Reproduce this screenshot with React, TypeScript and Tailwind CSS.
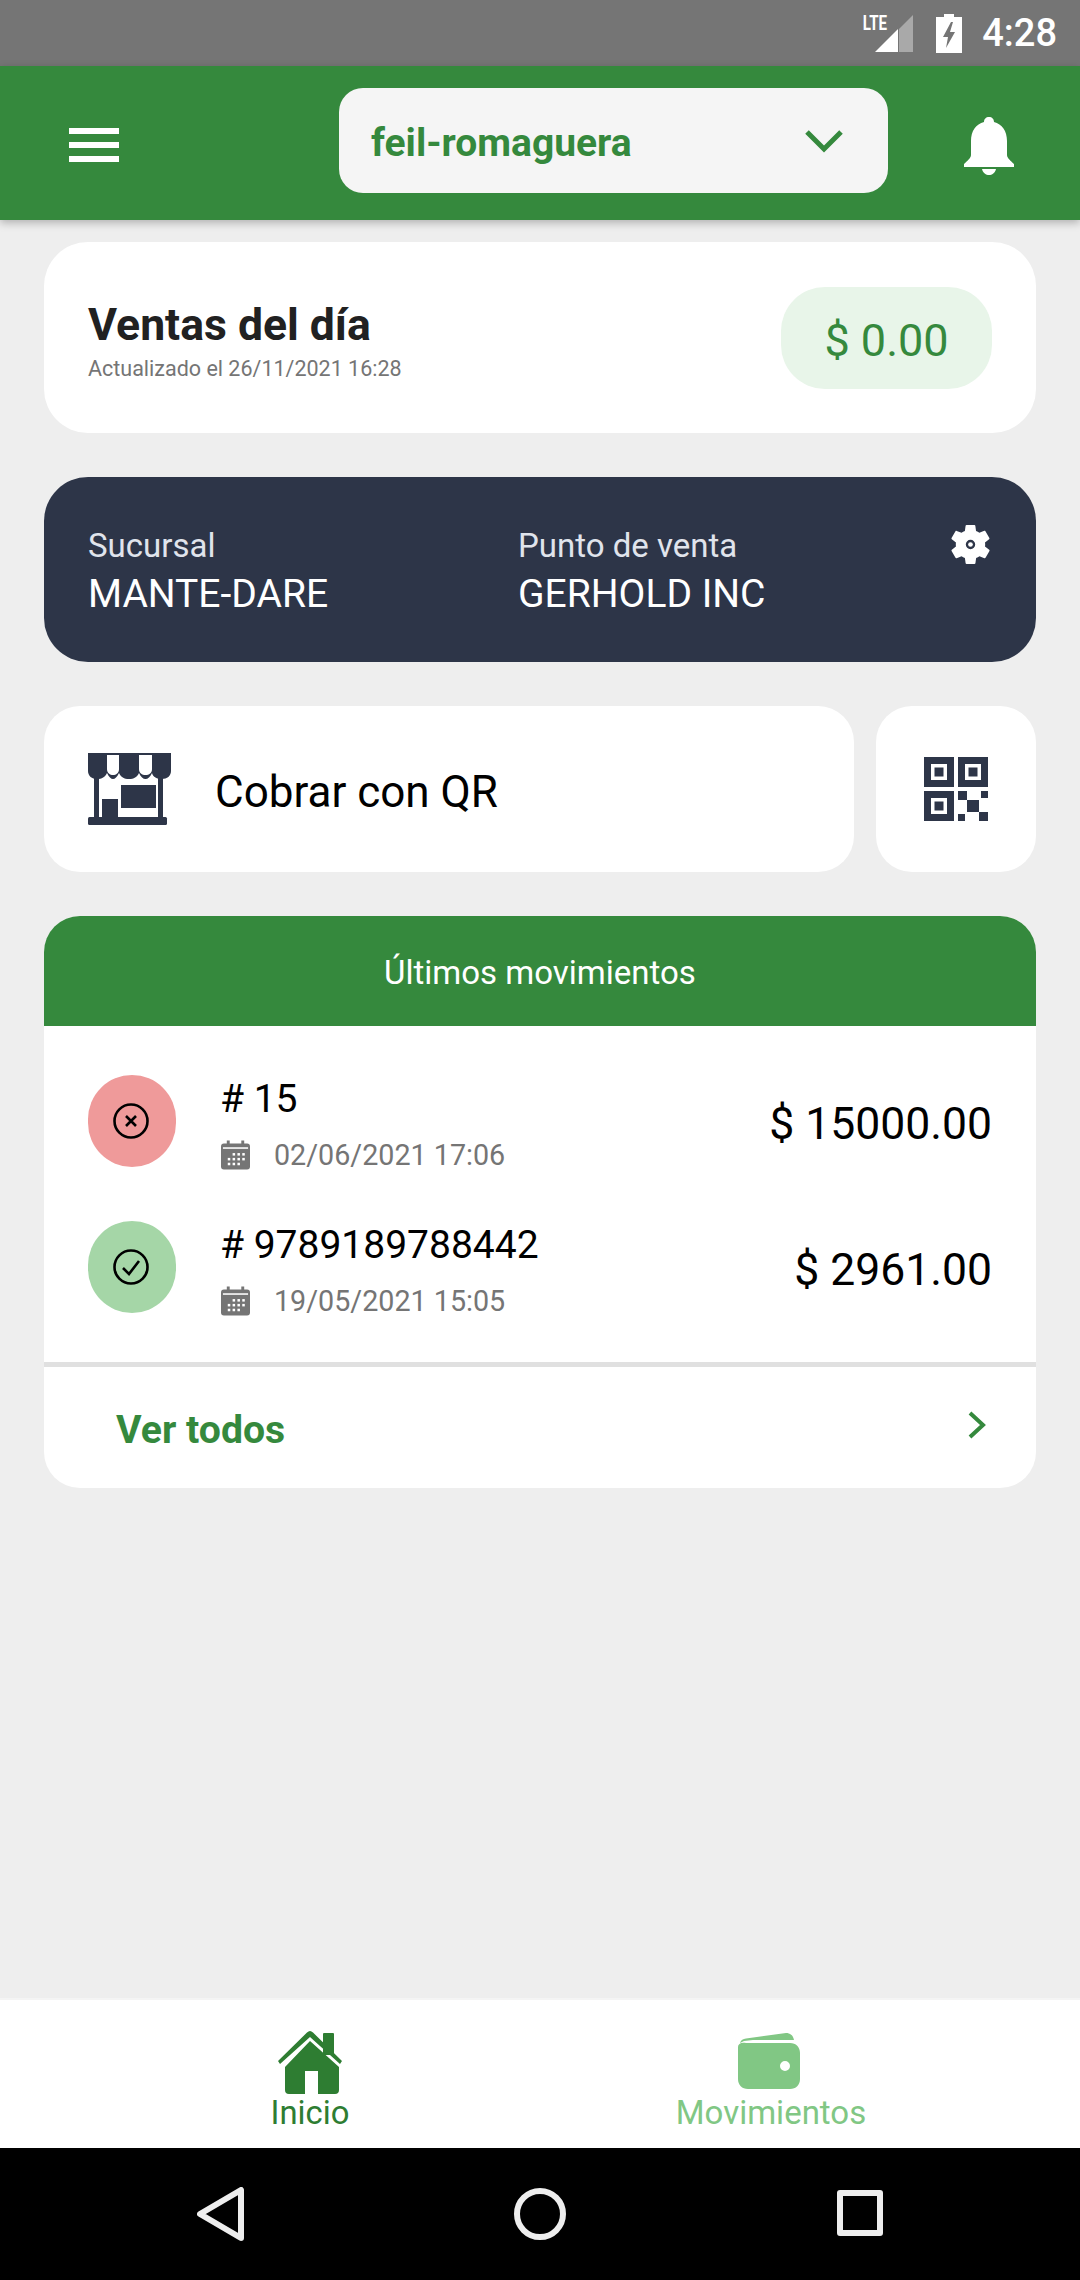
import React from "react";

function Status() {
  return (
    <div className="h-[66px] bg-[#757575] flex items-center justify-end pr-[23px] shrink-0">
      <div className="relative w-[38px] h-[37px] mr-[23px] mt-[1px]">
        <span className="absolute left-[-17px] top-[-4px] text-[21px] leading-[24px] font-bold text-white scale-x-[0.72]">LTE</span>
        <svg viewBox="0 0 38 37" className="w-[38px] h-[37px]">
          <path d="M24 14 L38 0 V37 H24 Z" fill="#a9a9a9" />
          <path d="M0 37 L23 14 V37 Z" fill="#fff" />
        </svg>
      </div>
      <svg viewBox="0 0 26 39" className="w-[26px] h-[39px] mr-[20px] mt-[1px]">
        <path d="M8 0 H18 V3 H26 V39 H0 V3 H8 Z" fill="#fff" />
        <path d="M15 8 L7 23 H12 L10 34 L19 18 H14 L17 8 Z" fill="#757575" />
      </svg>
      <span className="text-[38px] leading-none font-medium text-white">4:28</span>
    </div>
  );
}

function Header() {
  return (
    <div className="h-[154px] bg-[#35893d] flex items-start shrink-0 shadow-[0_3px_8px_rgba(0,0,0,0.25)] relative z-10">
      <div className="w-[339px] pl-[69px] pt-[62px] flex flex-col gap-[8px] shrink-0">
        <div className="w-[50px] h-[6px] bg-white" />
        <div className="w-[50px] h-[6px] bg-white" />
        <div className="w-[50px] h-[6px] bg-white" />
      </div>
      <div className="mt-[22px] w-[549px] h-[105px] bg-[#f5f5f5] rounded-[24px] flex items-center justify-between pl-[32px] pr-[45px] shrink-0">
        <span className="mt-[6px] text-[39px] font-bold text-[#35893d]">feil-romaguera</span>
        <svg viewBox="0 0 38 24" className="w-[38px] h-[24px]" fill="none" stroke="#35893d" strokeWidth="5">
          <path d="M2 3 L19 20 L36 3" />
        </svg>
      </div>
      <div className="flex-1 flex justify-center pl-[9px] pt-[51px]">
        <svg viewBox="0 0 50 58" className="w-[50px] h-[58px]" fill="#fff">
          <path d="M25 0 C28 0 30 2 30 5 C38 7 43 14 43 24 V38 C43 41 47 44 50 47 V50 H0 V47 C3 44 7 41 7 38 V24 C7 14 12 7 20 5 C20 2 22 0 25 0 Z" />
          <path d="M18 52 H32 C31 56 28 58 25 58 C22 58 19 56 18 52 Z" />
        </svg>
      </div>
    </div>
  );
}

function Calendar() {
  return (
    <svg viewBox="0 0 30 30" className="w-[29px] h-[30px] ml-[1px] shrink-0">
      <rect x="0" y="3" width="30" height="27" rx="3" fill="#757575" />
      <rect x="6" y="0" width="3" height="5" fill="#757575" />
      <rect x="21" y="0" width="3" height="5" fill="#757575" />
      <rect x="2" y="7" width="26" height="1.6" fill="#fff" />
      {[
        [12, 13], [17, 13], [22, 13],
        [7, 18], [12, 18], [17, 18], [22, 18],
        [7, 23], [12, 23], [17, 23],
      ].map(([x, y]) => (
        <rect key={`${x}-${y}`} x={x} y={y} width="2.6" height="2.6" fill="#fff" />
      ))}
    </svg>
  );
}

function Move({ ok, id, date, amount }: { ok: boolean; id: string; date: string; amount: string }) {
  return (
    <div className="h-[146px] pl-[44px] pr-[44px] flex items-center">
      <div className={`w-[88px] h-[92px] rounded-full flex items-center justify-center shrink-0 ${ok ? "bg-[#a5d6a7]" : "bg-[#ef9a9a]"}`}>
        <svg viewBox="0 0 36 36" className="w-[36px] h-[36px] mr-[3px]" fill="none" stroke="#000" strokeWidth="2.6">
          <circle cx="18" cy="18" r="16.5" />
          {ok ? <path d="M10 19 L16 25 L26 12" /> : <path d="M13 13 L23 23 M23 13 L13 23" />}
        </svg>
      </div>
      <div className="ml-[44px] pt-[6px] flex-1 flex flex-col">
        <span className="text-[39px] leading-[46px] text-black">{id}</span>
        <div className="flex items-center mt-[15px]">
          <Calendar />
          <span className="ml-[24px] text-[28.7px] leading-[36px] text-[#757575]">{date}</span>
        </div>
      </div>
      <span className="mt-[7px] text-[44.5px] text-black">{amount}</span>
    </div>
  );
}

export default function App() {
  return (
    <div className="w-[1080px] h-[2280px] bg-[#eeeeee] flex flex-col overflow-hidden font-['Roboto',sans-serif]">
      <Status />
      <Header />
      <main className="flex-1 px-[44px] pt-[22px] flex flex-col gap-[44px]">
        <section className="h-[191px] bg-white rounded-[44px] flex items-center justify-between pl-[44px] pr-[44px]">
          <div className="flex flex-col pt-[6px]">
            <span className="text-[44.5px] leading-[50px] font-bold text-[#212121]">Ventas del día</span>
            <span className="mt-[6px] text-[21.5px] leading-[26px] text-[#757575]">Actualizado el 26/11/2021 16:28</span>
          </div>
          <div className="w-[211px] h-[102px] rounded-[44px] bg-[#e8f5e9] flex items-center justify-center">
            <span className="mt-[6px] text-[45px] text-[#35893d]">$ 0.00</span>
          </div>
        </section>

        <section className="h-[185px] bg-[#2d3548] rounded-[44px] flex items-center pl-[44px] pr-[44px] relative">
          <div className="w-[430px] flex flex-col pt-[4px]">
            <span className="text-[33px] leading-[40px] text-[#e0e4ec]">Sucursal</span>
            <span className="mt-[4px] text-[39px] leading-[48px] text-white">MANTE-DARE</span>
          </div>
          <div className="flex flex-col pt-[4px]">
            <span className="text-[33px] leading-[40px] text-[#e0e4ec]">Punto de venta</span>
            <span className="mt-[4px] text-[39px] leading-[48px] text-white">GERHOLD INC</span>
          </div>
          <svg viewBox="0 0 24 24" className="absolute right-[42px] top-[44px] w-[47px] h-[47px]" fill="#fff">
            <path fillRule="evenodd" d="M19.4 13c.04-.32.1-.66.1-1s-.06-.68-.1-1l2.1-1.65c.2-.15.25-.42.13-.64l-2-3.46c-.12-.22-.4-.3-.6-.22l-2.5 1c-.52-.4-1.08-.73-1.7-.98l-.37-2.65A.5.5 0 0 0 14 2h-4a.5.5 0 0 0-.5.42l-.37 2.65c-.62.25-1.18.6-1.7.98l-2.5-1c-.22-.08-.48 0-.6.22l-2 3.46c-.13.22-.07.49.12.64L4.57 11c-.04.32-.07.66-.07 1s.03.68.07 1l-2.11 1.65c-.19.15-.25.42-.12.64l2 3.46c.12.22.38.3.6.22l2.5-1c.52.4 1.08.73 1.7.98l.37 2.65c.05.24.25.42.5.42h4c.25 0 .46-.18.5-.42l.37-2.65c.62-.25 1.18-.58 1.7-.98l2.5 1c.22.08.48 0 .6-.22l2-3.46c.12-.22.07-.49-.13-.64L19.4 13zM12 14.400A2.400 2.400 0 1 1 12 9.600a2.400 2.400 0 0 1 0 4.800z" />
            <circle cx="12" cy="12" r="1.2" />
          </svg>
        </section>

        <section className="h-[166px] flex gap-[22px]">
          <div className="flex-1 bg-white rounded-[36px] flex items-center pl-[44px]">
            <svg viewBox="0 0 83 72" className="w-[83px] h-[72px] shrink-0">
              <g fill="#2d3548">
                <path d="M0 0 H83 V18 C83 23 79 26 74 26 C69 26 65 24 64 20 C62 24 60 26 57.500 26 C55 26 53 24 51 20 C49 24 46 26 41 26 C36 26 33 24 31 20 C29 24 27 26 25 26 C23 26 21 24 19 20 C17 24 14 26 9 26 C4 26 0 23 0 18 Z" />
                <rect x="6" y="24" width="5" height="42" />
                <rect x="70" y="24" width="5" height="42" />
                <rect x="33" y="32" width="35" height="23" />
                <rect x="14" y="46" width="16" height="20" />
                <rect x="0" y="64" width="79" height="8" rx="1.500" />
              </g>
              <path d="M19 2 H31 V16 C31 20 28 22 25 22 C22 22 19 20 19 16 Z" fill="#fff" />
              <path d="M51 2 H64 V16 C64 20 61 22 57.500 22 C54 22 51 20 51 16 Z" fill="#fff" />
            </svg>
            <span className="ml-[44px] mt-[6px] text-[44px] text-black">Cobrar con QR</span>
          </div>
          <div className="w-[160px] bg-white rounded-[36px] flex items-center justify-center">
            <svg viewBox="0 0 64 64" className="w-[64px] h-[64px]">
              <g fill="#2d3548">
                <path fillRule="evenodd" d="M0 0 H30 V30 H0 Z M7 7 V23 H23 V7 Z" />
                <rect x="10.5" y="10.5" width="9" height="9" />
                <path fillRule="evenodd" d="M34 0 H64 V30 H34 Z M41 7 V23 H57 V7 Z" />
                <rect x="44.500" y="10.5" width="9" height="9" />
                <path fillRule="evenodd" d="M0 34 H30 V64 H0 Z M7 41 V57 H23 V41 Z" />
                <rect x="10.5" y="44.5" width="9" height="9" />
                <rect x="34" y="34" width="9" height="9" />
                <rect x="57" y="34" width="7" height="7" />
                <rect x="43" y="43" width="12" height="12" />
                <rect x="34" y="57" width="7" height="7" />
                <rect x="55" y="55" width="9" height="9" />
              </g>
            </svg>
          </div>
        </section>

        <section className="rounded-[36px] bg-white overflow-hidden flex flex-col">
          <div className="h-[110px] bg-[#35893d] flex items-center justify-center">
            <span className="mt-[4px] text-[33px] text-white">Últimos movimientos</span>
          </div>
          <div className="pt-[22px] pb-[22px]">
            <Move ok={false} id="# 15" date="02/06/2021 17:06" amount="$ 15000.00" />
            <Move ok id="# 9789189788442" date="19/05/2021 15:05" amount="$ 2961.00" />
          </div>
          <div className="h-[5px] bg-[#e0e0e0]" />
          <div className="h-[121px] flex items-center justify-between pl-[72px] pr-[49px]">
            <span className="mt-[5px] text-[39.2px] font-bold text-[#35893d]">Ver todos</span>
            <svg viewBox="0 0 20 30" className="mb-[5px] w-[20px] h-[30px]" fill="none" stroke="#35893d" strokeWidth="4">
              <path d="M3 3 L16 15 L3 27" />
            </svg>
          </div>
        </section>
      </main>

      <nav className="h-[150px] bg-white border-t-2 border-[#f4f4f4] flex shrink-0">
        <div className="w-[620px] flex flex-col items-center pt-[31px]">
          <svg viewBox="0 0 64 63" className="w-[64px] h-[63px]">
            <g fill="#2e7d32">
              <rect x="45" y="2" width="11" height="22" rx="1" />
              <path d="M32 0 C33 0 34 .5 35 1.500 L64 30 L62 33 L32 6 L2 33 L0 30 L29 1.500 C30 .5 31 0 32 0 Z" />
              <path fillRule="evenodd" d="M32 10 L61 36 V59 Q61 63 57 63 H11 Q7 63 7 59 V36 Z M27 40 V63 H40 V40 Z" />
            </g>
          </svg>
          <span className="text-[32.800px] leading-[38px] text-[#2e7d32]">Inicio</span>
        </div>
        <div className="flex-1 flex flex-col items-center pr-[158px] pt-[33px]">
          <svg viewBox="0 0 62 56" className="w-[62px] h-[56px] mr-[4px]">
            <g fill="#81c784">
              <path d="M2 10 C3 7 5 6 8 5.500 L48 0 C52 0 55 2 56 7 H15 L6 8 Z" />
              <path fillRule="evenodd" d="M0 14 C0 11 3 9 8 10 H52 C58 10 62 14 62 20 V46 C62 52 58 56 52 56 H10 C4 56 0 52 0 46 Z M47 28 A5 5 0 1 0 47 38 A5 5 0 1 0 47 28 Z" />
            </g>
          </svg>
          <span className="text-[33px] leading-[38px] text-[#81c784] mt-[5px]">Movimientos</span>
        </div>
      </nav>

      <div className="h-[132px] bg-black shrink-0 relative">
        <svg viewBox="0 0 48 54" className="absolute left-[197px] top-[39px] w-[48px] h-[54px]" fill="none" stroke="#eeeeee" strokeWidth="6" strokeLinejoin="round">
          <path d="M44 3 V51 L3 27 Z" />
        </svg>
        <div className="absolute left-[514px] top-[40px] w-[52px] h-[52px] rounded-full border-[6px] border-[#eeeeee]" />
        <div className="absolute left-[837px] top-[42px] w-[46px] h-[46px] rounded-[3px] border-[6px] border-[#eeeeee]" />
      </div>
    </div>
  );
}
